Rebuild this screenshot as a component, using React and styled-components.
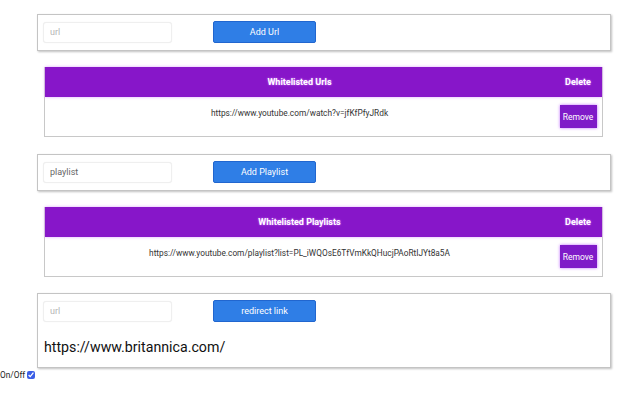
import React from "react";
import styled, { createGlobalStyle } from "styled-components";

const GlobalStyle = createGlobalStyle`
  body {
    margin: 0;
    background: #ffffff;
    font-family: Roboto, "Liberation Sans", sans-serif;
    color: #222;
  }
`;

const Page = styled.div`
  width: 640px;
  height: 400px;
  padding-top: 14px;
  box-sizing: border-box;
  display: flex;
  flex-direction: column;
`;

const Card = styled.div`
  margin-left: 37px;
  width: 574px;
  box-sizing: border-box;
  border: 1px solid #c4c4c4;
  box-shadow: 1px 1px 2px rgba(0, 0, 0, 0.25);
  padding: 6px 5px 7px 5px;
  margin-bottom: ${({ gap }) => gap}px;
`;

const Controls = styled.div`
  display: flex;
  align-items: center;
  gap: 41px;
`;

const Field = styled.input`
  width: 129px;
  height: 21px;
  box-sizing: border-box;
  border: 1px solid #efefef;
  border-radius: 3px;
  box-shadow: 0 0 1px rgba(0, 0, 0, 0.08);
  padding: 0 6px;
  font-family: Roboto, "Liberation Sans", sans-serif;
  font-size: 9px;
  outline: none;
  &::placeholder {
    color: ${({ dark }) => (dark ? "#666" : "#b4b4b4")};
  }
`;

const Action = styled.button`
  width: 103px;
  height: 22px;
  border: 1px solid #2166cf;
  border-radius: 2px;
  background: #2f7ee6;
  color: #fff;
  font-family: Roboto, "Liberation Sans", sans-serif;
  font-size: 9px;
  padding: 0;
`;

const Redirect = styled.div`
  font-family: Roboto, "Liberation Sans", sans-serif;
  font-size: 14.2px;
  line-height: 18px;
  padding: 16px 0 4px 1px;
  color: #111;
`;

const Table = styled.div`
  margin-left: 44px;
  width: 559px;
  box-sizing: border-box;
  border: 1px solid #c8c8c8;
  border-top: none;
  margin-bottom: ${({ gap }) => gap}px;
`;

const Head = styled.div`
  display: grid;
  grid-template-columns: 1fr 48px;
  align-items: center;
  height: 30px;
  background: #8716c9;
  box-shadow: 0 0 3px #e0a8ff;
  color: #fff;
  font-weight: 700;
  font-size: 9px;
  text-shadow: 0 0 2px #d880ff;
  text-align: center;
  position: relative;
`;

const Row = styled.div`
  display: grid;
  grid-template-columns: 1fr 48px;
  height: 39px;
  font-size: 8.3px;
  color: #333;
`;

const Link = styled.div`
  text-align: center;
  padding-top: 11px;
`;

const RemoveCell = styled.div`
  display: flex;
  justify-content: center;
  align-items: center;
`;

const Remove = styled.button`
  width: 37px;
  height: 23px;
  border: none;
  background: #7f1ac8;
  box-shadow: 0 0 3px #c070ff;
  color: #fff;
  font-family: Roboto, "Liberation Sans", sans-serif;
  font-size: 8.5px;
  padding: 0;
`;

const Toggle = styled.label`
  display: flex;
  align-items: center;
  gap: 2px;
  font-size: 8.3px;
  color: #222;
  margin-top: 2px;
  input {
    width: 8px;
    height: 8px;
    margin: 0;
    accent-color: #3b5ee6;
  }
`;

const ListTable = ({ title, link, gap }) => (
  <Table gap={gap}>
    <Head>
      <span>{title}</span>
      <span>Delete</span>
    </Head>
    <Row>
      <Link>{link}</Link>
      <RemoveCell>
        <Remove>Remove</Remove>
      </RemoveCell>
    </Row>
  </Table>
);

export default function App() {
  return (
    <Page>
      <GlobalStyle />
      <Card gap={16}>
        <Controls>
          <Field placeholder="url" />
          <Action>Add Url</Action>
        </Controls>
      </Card>
      <ListTable
        title="Whitelisted Urls"
        link="https://www.youtube.com/watch?v=jfKfPfyJRdk"
        gap={17}
      />
      <Card gap={16}>
        <Controls>
          <Field placeholder="playlist" dark />
          <Action>Add Playlist</Action>
        </Controls>
      </Card>
      <ListTable
        title="Whitelisted Playlists"
        link="https://www.youtube.com/playlist?list=PL_iWQOsE6TfVmKkQHucjPAoRtIJYt8a5A"
        gap={16}
      />
      <Card gap={0}>
        <Controls>
          <Field placeholder="url" />
          <Action>redirect link</Action>
        </Controls>
        <Redirect>https://www.britannica.com/</Redirect>
      </Card>
      <Toggle>
        On/Off
        <input type="checkbox" defaultChecked />
      </Toggle>
    </Page>
  );
}
